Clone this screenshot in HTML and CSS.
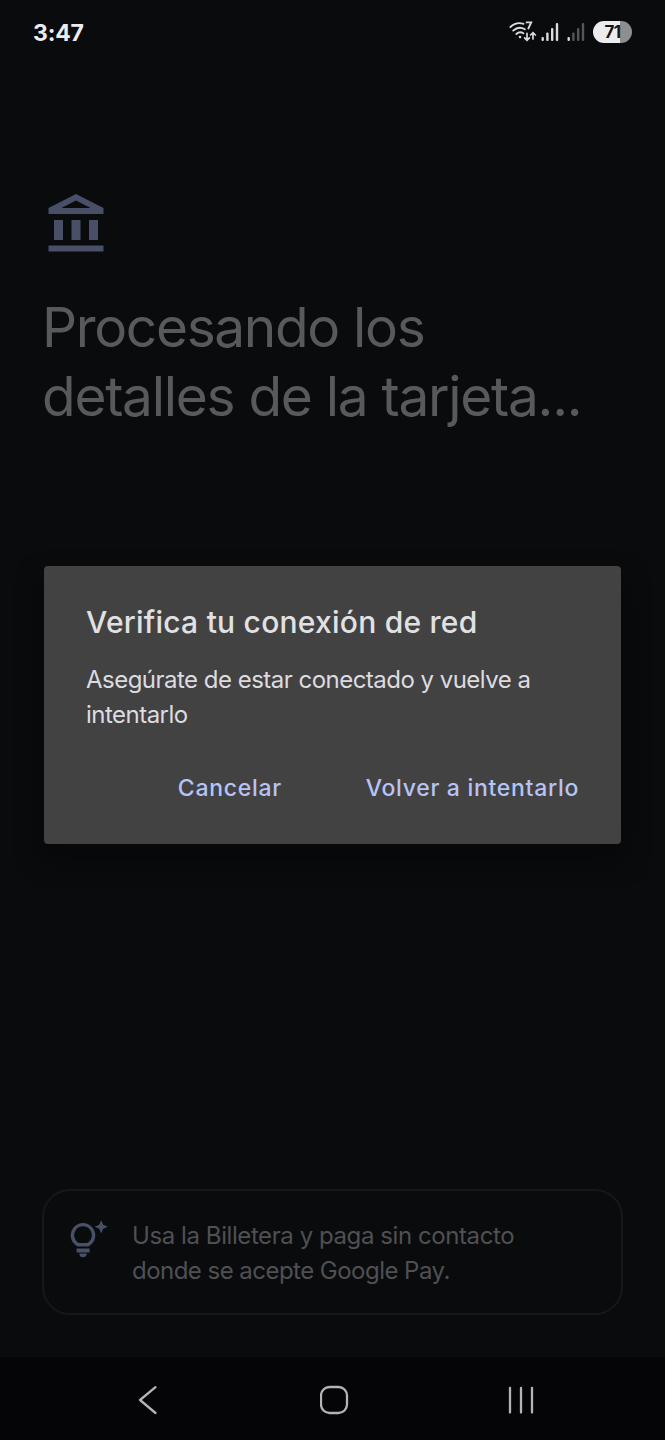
FILE: index.html
```
<!DOCTYPE html>
<html lang="es">
<head>
<meta charset="utf-8">
<title>Verifica tu conexión de red</title>
<link rel="stylesheet" href="styles.css">
</head>
<body>
<div class="screen">
  <header class="status">
    <span class="clock">3:47</span>
    <div class="indicators">
      <svg class="wifi" width="28" height="24" viewBox="0 0 28 24" fill="none" stroke="#dcdcde" stroke-width="1.9" stroke-linecap="round">
        <path d="M1.400 7C5 3.600 10 2.400 14.500 3.800M4.200 10.600C7.400 7.600 12 7 15.800 9.200M7.400 14C9.200 12.200 12 11.800 14.400 13.200"/>
        <path d="M17.600 2.400H22.200L19.400 8.400"/>
        <circle cx="11" cy="17" r="1.300" fill="#dcdcde" stroke="none"/>
        <path d="M18 13.400V20M15.600 17.800L18 20.200L20.400 17.800M24 19V12.600M21.600 15L24 12.600L26.400 15" stroke-width="1.700"/>
      </svg>
      <svg class="signal" width="18" height="20" viewBox="0 0 18 20" fill="#dcdcde">
        <rect x="0.500" y="15" width="2.400" height="4" rx="1"/><rect x="5.200" y="10.500" width="2.400" height="8.500" rx="1"/><rect x="10" y="6" width="2.400" height="13" rx="1"/><rect x="14.800" y="1" width="2.400" height="18" rx="1"/>
      </svg>
      <svg class="signal" width="18" height="20" viewBox="0 0 18 20" fill="#55565a">
        <rect x="0.500" y="15" width="2.400" height="4" rx="1" fill="#dcdcde"/><rect x="5.200" y="10.500" width="2.400" height="8.500" rx="1"/><rect x="10" y="6" width="2.400" height="13" rx="1"/><rect x="14.800" y="1" width="2.400" height="18" rx="1"/>
      </svg>
      <span class="battery">71</span>
    </div>
  </header>
  <main class="content">
    <svg class="bank" width="64" height="64" viewBox="0 0 64 64" fill="#484f67">
      <path fill-rule="evenodd" d="M32 2L59.500 16V22H4.500V16ZM32 8.500L17.500 16H46.500Z"/>
      <path d="M10 28h9v20h-9zM27.500 28h9v20h-9zM45 28h9v20h-9zM4.500 53.600h55v6h-55z"/>
    </svg>
    <h1 class="heading"><span class="heading-first">Procesando los</span><br><span class="heading-second">detalles de la tarjeta...</span></h1>
    <section class="tip">
      <svg class="bulb" width="40" height="44" viewBox="0 0 40 44" fill="#484f67">
        <path fill-rule="evenodd" d="M8.700 28.500A12.300 12.300 0 1 1 19.300 28.500ZM10 25H18A8.800 8.800 0 1 0 10 25Z"/>
        <path d="M7.600 30.500H20.600V34.500H7.600ZM10.300 35.500H17.700A3.700 3.700 0 0 1 10.300 35.500Z"/>
        <path d="M32.200 2.200L34.200 6.800L38.800 8.800L34.200 10.800L32.200 15.400L30.200 10.800L25.600 8.800L30.200 6.800Z"/>
      </svg>
      <p class="tip-text"><span class="tip-first">Usa la Billetera y paga sin contacto</span><br><span class="tip-second">donde se acepte Google Pay.</span></p>
    </section>
  </main>
  <nav class="navbar">
    <svg class="nav-icon" width="30" height="30" viewBox="0 0 30 30"><path d="M21.500 2.200L6 15L21.500 28"/></svg>
    <svg class="nav-icon" width="30" height="30" viewBox="0 0 30 30"><rect x="1" y="2" width="26" height="26" rx="8.500"/></svg>
    <svg class="nav-icon" width="30" height="30" viewBox="0 0 30 30"><path d="M4 3V27.500M15 3V27.500M26 3V27.500"/></svg>
  </nav>
  <div class="dialog" role="dialog">
    <h2 class="dialog-title">Verifica tu conexión de red</h2>
    <p class="dialog-text">Asegúrate de estar conectado y vuelve a intentarlo</p>
    <div class="actions">
      <button class="action">Cancelar</button>
      <button class="action">Volver a intentarlo</button>
    </div>
  </div>
</div>
</body>
</html>
```
FILE: styles.css
```
* { box-sizing: border-box; }
body { margin: 0; background: #0a0b0d; font-family: Inter, "Liberation Sans", sans-serif; }
h1, h2, p { margin: 0; font-weight: 400; }
svg { display: block; }
.screen { position: relative; width: 665px; height: 1440px; overflow: hidden; display: flex; flex-direction: column; background: #0a0b0d; }
.status { height: 64px; padding: 0 33px; display: flex; align-items: center; justify-content: space-between; }
.clock { padding-top: 1px; font-size: 23px; font-weight: 700; color: #ececee; letter-spacing: -0.200px; }
.indicators { display: flex; align-items: center; }
.wifi { margin-right: 4px; }
.signal { margin-right: 8px; }
.battery { width: 39px; height: 22px; border-radius: 11px; background: linear-gradient(to right, #ececee 27px, #8e8e90 27px); color: #141416; font-size: 17px; font-weight: 700; line-height: 22px; text-align: center; letter-spacing: -0.500px; }
.content { flex: 1; display: flex; flex-direction: column; padding: 128px 42px 42px; }
.bank { margin-left: 2px; }
.heading { margin-top: 37px; font-size: 55px; line-height: 69px; color: #58595b; white-space: nowrap; }
.heading-first { letter-spacing: -1.350px; }
.heading-second { letter-spacing: -1.300px; }
.tip { margin-top: auto; height: 126px; border: 2px solid #17181a; border-radius: 28px; padding: 27px 25px; display: flex; gap: 23px; }
.bulb { flex: none; }
.tip-text { padding-top: 1px; font-size: 24px; line-height: 34.500px; color: #4f5053; white-space: nowrap; }
.tip-first { letter-spacing: -0.420px; }
.tip-second { letter-spacing: -0.530px; }
.navbar { height: 83px; padding: 3px 129px 0 134px; background: #050507; display: flex; align-items: center; justify-content: space-between; }
.nav-icon { fill: none; stroke: #b4b4b6; stroke-width: 2.300; stroke-linecap: round; stroke-linejoin: round; }
.dialog { position: absolute; left: 44px; top: 565.500px; width: 577px; height: 278px; border-radius: 4px; background: #424242; padding: 36px 42px 0 42px; box-shadow: 0 14px 24px 2px #07080a; }
.dialog-title { font-size: 30px; line-height: 40px; font-weight: 500; color: #e1e1e4; letter-spacing: 0.240px; white-space: nowrap; }
.dialog-text { margin-top: 20px; font-size: 24px; line-height: 35px; color: #dcdce0; letter-spacing: -0.520px; }
.actions { margin-top: 40px; display: flex; justify-content: flex-end; gap: 84px; }
.action { border: 0; padding: 0; background: none; font: 500 23px/32px Inter, "Liberation Sans", sans-serif; letter-spacing: 0.700px; color: #b5c4f5; white-space: nowrap; }
```
